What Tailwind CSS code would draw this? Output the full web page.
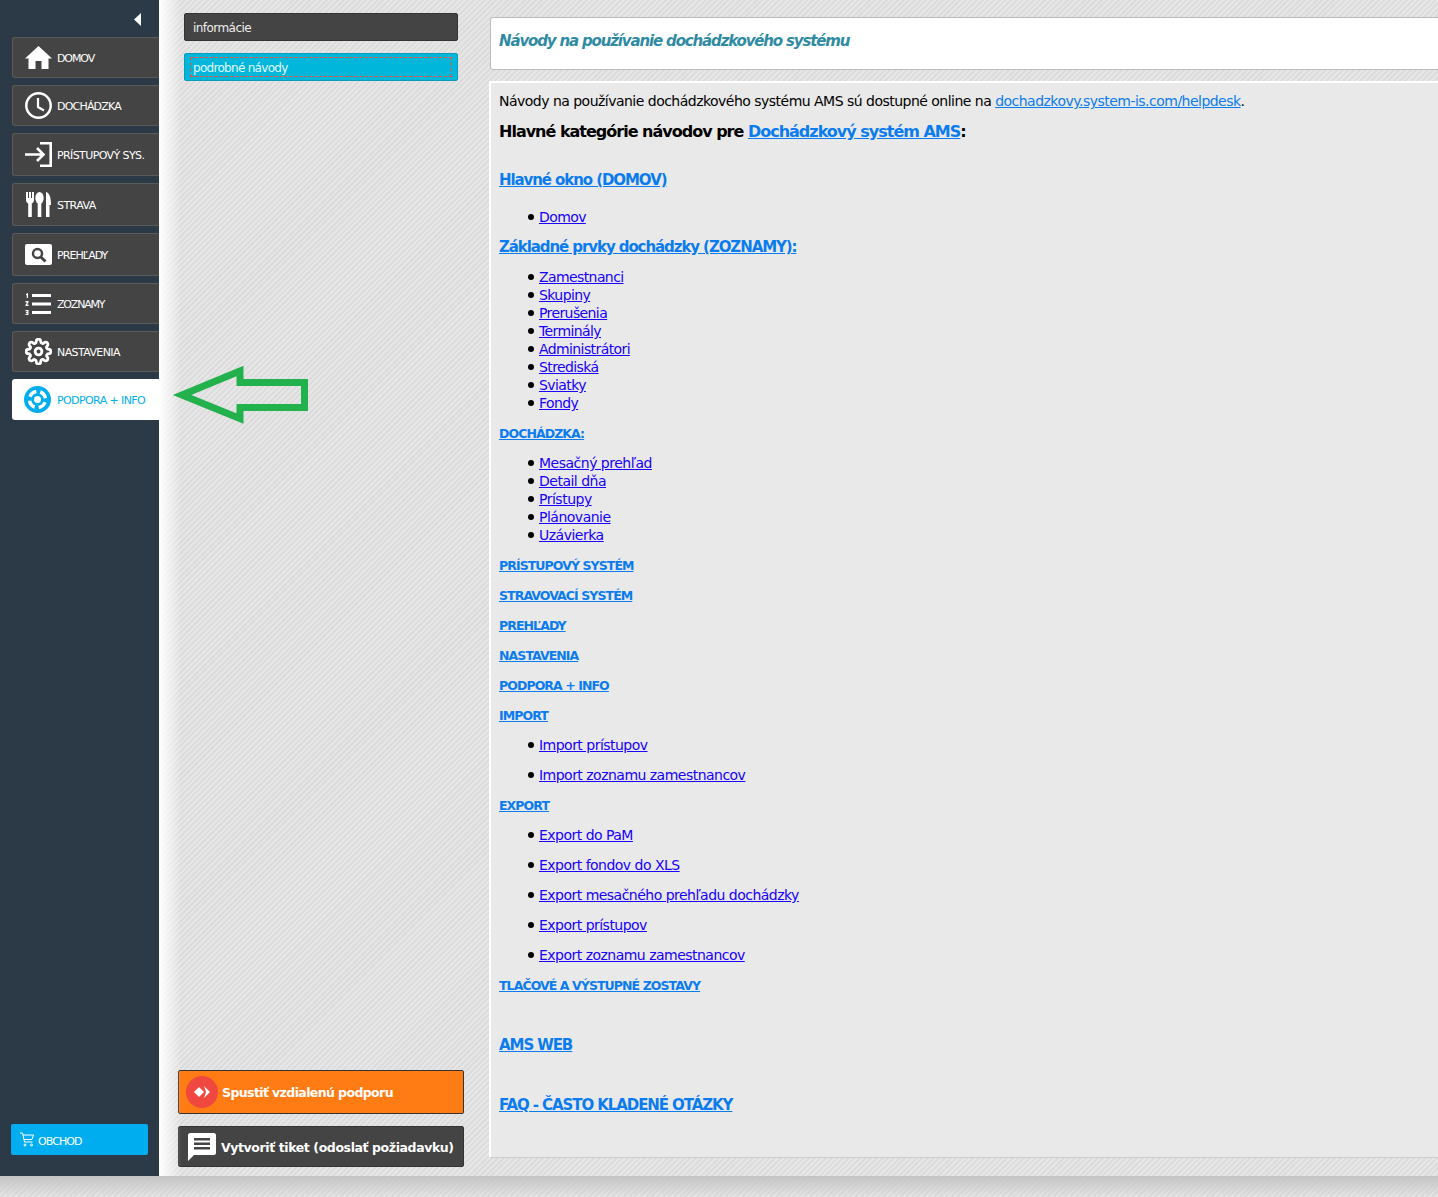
<!DOCTYPE html>
<html lang="sk">
<head>
<meta charset="UTF-8">
<title>Návody</title>
<script src="https://cdn.jsdelivr.net/npm/@tailwindcss/browser@4"></script>
</head>
<body class="bg-[#e2e2e2]">
<div class="relative w-[1438px] h-[1197px] overflow-hidden font-['DejaVu_Sans',sans-serif] bg-[repeating-linear-gradient(135deg,#e6e6e6_0px,#e6e6e6_2px,#dcdcdc_2px,#dcdcdc_4px)]">
  <div class="flex h-[1176px]">
    <!-- sidebar -->
    <aside class="w-[159px] shrink-0 bg-[#2c3a47] flex flex-col">
      <div class="h-[37px] flex justify-end pt-[13px] pr-[18px]">
        <svg width="7" height="13" viewBox="0 0 7 13"><path d="M7 0V13L0 6.500Z" fill="#fff"/></svg>
      </div>
      <a class="ml-[12px] h-[41px] mb-[7px] flex items-center pl-[12px] gap-[5px] bg-[#444] border border-r-0 border-[#5a5a5a] rounded-l-[3px] text-white text-[11px] tracking-[-1.1px]">
        <svg width="27" height="23" viewBox="0 0 27 23" fill="#fff"><path d="M13.500 0L27 12.500H23.500V23H16.500V15H10.500V23H3.500V12.500H0Z"/></svg><span class="mt-[4px]">DOMOV</span></a>
      <a class="ml-[12px] h-[41px] mb-[7px] flex items-center pl-[12px] gap-[5px] bg-[#444] border border-r-0 border-[#5a5a5a] rounded-l-[3px] text-white text-[11px] tracking-[-0.8px]">
        <svg width="27" height="27" viewBox="0 0 27 27" fill="none" stroke="#fff"><circle cx="13.500" cy="13.500" r="12.200" stroke-width="2.500"/><path d="M13 6V15L19 18.500" stroke-width="2.200"/></svg><span class="mt-[4px]">DOCHÁDZKA</span></a>
      <a class="ml-[12px] h-[43px] mb-[7px] flex items-center pl-[12px] gap-[5px] bg-[#444] border border-r-0 border-[#5a5a5a] rounded-l-[3px] text-white text-[11px] tracking-[-0.6px]">
        <svg width="27" height="25" viewBox="0 0 27 25" fill="none" stroke="#fff" stroke-width="2.600"><path d="M0 12.500H18M12 6L18.500 12.500L12 19"/><path d="M15 1.300H25.700V23.700H15"/></svg><span class="mt-[4px]">PRÍSTUPOVÝ SYS.</span></a>
      <a class="ml-[12px] h-[43px] mb-[7px] flex items-center pl-[13px] gap-[6px] bg-[#444] border border-r-0 border-[#5a5a5a] rounded-l-[3px] text-white text-[11px] tracking-[-0.55px]">
        <svg width="25" height="25" viewBox="0 0 25 25" fill="#fff"><path d="M0 0H2V6H3V0H5V6H6V0H8V8C8 10 7 11 5.800 11.500V25H2.200V11.500C1 11 0 10 0 8Z"/><ellipse cx="13.500" cy="6" rx="4.200" ry="6"/><rect x="11.700" y="10" width="3.600" height="15"/><path d="M20 0C23.500 1 25 5 25 13H23.500V25H20Z"/></svg><span class="mt-[4px]">STRAVA</span></a>
      <a class="ml-[12px] h-[43px] mb-[7px] flex items-center pl-[12px] gap-[5px] bg-[#444] border border-r-0 border-[#5a5a5a] rounded-l-[3px] text-white text-[11px] tracking-[-0.95px]">
        <svg width="27" height="21" viewBox="0 0 27 21"><rect width="27" height="21" rx="2" fill="#fff"/><circle cx="12.500" cy="9.500" r="4.500" fill="none" stroke="#444" stroke-width="2.400"/><path d="M15.800 13L20.500 17.500" stroke="#444" stroke-width="3"/></svg><span class="mt-[4px]">PREHĽADY</span></a>
      <a class="ml-[12px] h-[41px] mb-[7px] flex items-center pl-[12px] gap-[6px] bg-[#444] border border-r-0 border-[#5a5a5a] rounded-l-[3px] text-white text-[11px] tracking-[-1.2px]">
        <svg width="26" height="22" viewBox="0 0 26 22" fill="#fff"><path d="M7 1H26V4H7ZM7 9.500H26V12.500H7ZM7 18H26V21H7Z"/><path d="M1 1L3 0V5H1.800V2L1 2.200ZM0.500 8H3.500V9.500L1.800 11.500H3.500V13H0.500V11.700L2.200 9.500H0.500ZM0.500 17H3.500V22H0.500V20.800H2.300V20H1V19H2.300V18.200H0.500Z"/></svg><span class="mt-[4px]">ZOZNAMY</span></a>
      <a class="ml-[12px] h-[41px] mb-[7px] flex items-center pl-[12px] gap-[5px] bg-[#444] border border-r-0 border-[#5a5a5a] rounded-l-[3px] text-white text-[11px] tracking-[-0.6px]">
        <svg width="27" height="27" viewBox="0 0 24 24" fill="none" stroke="#fff" stroke-width="2.500"><circle cx="12" cy="12" r="3"/><path d="M19.400 15a1.650 1.650 0 0 0 .33 1.820l.06.06a2 2 0 1 1-2.830 2.830l-.06-.06a1.650 1.650 0 0 0-2.900 1.170V21a2 2 0 1 1-4 0v-.09a1.650 1.650 0 0 0-2.900-1.170l-.06.06a2 2 0 1 1-2.830-2.830l.06-.06a1.650 1.650 0 0 0-1.170-2.900H3a2 2 0 1 1 0-4h.09a1.650 1.650 0 0 0 1.170-2.900l-.06-.06a2 2 0 1 1 2.830-2.830l.06.06a1.650 1.650 0 0 0 2.900-1.170V3a2 2 0 1 1 4 0v.09a1.650 1.650 0 0 0 2.900 1.170l.06-.06a2 2 0 1 1 2.830 2.830l-.06.06a1.650 1.650 0 0 0 1.170 2.900H21a2 2 0 1 1 0 4h-.09a1.650 1.650 0 0 0-1.510 1z"/></svg><span class="mt-[4px]">NASTAVENIA</span></a>
      <a class="ml-[12px] h-[41px] flex items-center pl-[12px] gap-[6px] bg-white rounded-l-[3px] text-[#00aeef] text-[11px] tracking-[-0.6px]">
        <svg width="27" height="27" viewBox="0 0 27 27"><circle cx="13.500" cy="13.500" r="13.500" fill="#00aeef"/><circle cx="13.500" cy="13.500" r="8" fill="none" stroke="#fff" stroke-width="3.500" stroke-dasharray="8.500 4" transform="rotate(20 13.500 13.500)"/><circle cx="13.500" cy="13.500" r="3.500" fill="#fff"/></svg><span class="mt-[4px]">PODPORA + INFO</span></a>
      <a class="mt-auto mb-[21px] ml-[11px] w-[137px] h-[31px] flex items-center pl-[9px] gap-[4px] bg-[#00aeef] rounded-[2px] text-white text-[11px] tracking-[-0.9px]">
        <svg width="14" height="15" viewBox="0 0 14 15" fill="none" stroke="#fff"><path d="M0 1H2.500L4.500 10H12.500M3 3H13.500L12 7.500H4"/><circle cx="5" cy="13" r="1"/><circle cx="11.500" cy="13" r="1"/></svg><span class="mt-[5px]">OBCHOD</span></a>
    </aside>

    <!-- middle column -->
    <section class="relative w-[331px] shrink-0 flex flex-col pt-[13px] pb-[9px] pl-[19px]">
      <div class="absolute left-0 top-0 bottom-0 w-[22px] bg-gradient-to-r from-white to-transparent"></div>
      <div class="relative ml-[6px] w-[274px] h-[28px] flex items-center pl-[8px] pt-[2px] bg-[#444] border border-[#333] rounded-[2px] text-[#eee] text-[12px] tracking-[-0.55px]">informácie</div>
      <div class="relative ml-[6px] mt-[12px] w-[274px] h-[28px] px-[5px] py-[3px] bg-[#00b7db] border border-[#0a9cb8] rounded-[2px]">
        <div class="h-full flex items-center pl-[2px] pt-[2px] border border-dashed border-[#ff4a2a] text-[#e6f7fb] text-[12px] tracking-[-0.7px]">podrobné návody</div>
      </div>
      <a class="mt-auto w-[286px] h-[44px] flex items-center pl-[7px] gap-[4px] bg-[#ff7b14] border border-[#333] rounded-[2px] text-white font-bold text-[12.500px] tracking-[-0.6px]">
        <svg width="32" height="32" viewBox="0 0 32 32"><circle cx="16" cy="16" r="16" fill="#f0483e"/><path d="M13 11L18 16L13 21L8 16Z" fill="#fff"/><path d="M18 10L24 16L18 22L20 16Z" fill="#fff"/></svg><span class="mt-[2px]">Spustiť vzdialenú podporu</span></a>
      <a class="mt-[12px] w-[286px] h-[41px] flex items-center pl-[9px] gap-[5px] bg-[#444] border border-[#333] rounded-[2px] text-white font-bold text-[12.500px] tracking-[-0.4px]">
        <svg width="28" height="28" viewBox="0 0 28 28"><path d="M2 0H26C27 0 28 1 28 2V20C28 21 27 22 26 22H6L0 28V2C0 1 1 0 2 0Z" fill="#fff"/><path d="M6 5H22V7.500H6ZM6 9.500H22V12H6ZM6 14H22V16.500H6Z" fill="#444"/></svg><span class="mt-[4px]">Vytvoriť tiket (odoslať požiadavku)</span></a>
    </section>

    <!-- main -->
    <main class="w-[960px] shrink-0 pt-[17px] text-[14px] tracking-[-0.52px] text-black">
      <div class="h-[53px] bg-white border border-[#bbb] rounded-[3px] pl-[8px] pt-[12px] text-[15px] italic font-bold tracking-[-1.15px] text-[#2f8ba3]">Návody na používanie dochádzkového systému</div>
      <div class="mt-[11px] -ml-px h-[1077px] bg-[#e9e9e9] border-t-2 border-l-2 border-b border-t-white border-l-white border-b-[#ccc] pl-[8px] pt-[9px]">
        <p class="h-[18px] leading-[18px]">Návody na používanie dochádzkového systému AMS sú dostupné online na <a class="text-[#0a7cf0] underline">dochadzkovy.system-is.com/helpdesk</a>.</p>
        <p class="mt-[10px] h-[24px] leading-[24px] text-[16px] font-bold tracking-[-1px]">Hlavné kategórie návodov pre <a class="text-[#0a7cf0] underline">Dochádzkový systém AMS</a>:</p>
        <h2 class="mt-[24px] h-[24px] leading-[24px] text-[15px] font-bold tracking-[-1.08px]"><a class="text-[#0a7cf0] underline">Hlavné okno (DOMOV)</a></h2>
        <ul class="mt-[16px] pl-[40px] tracking-[-0.6px]">
          <li class="relative h-[18px] leading-[18px] before:absolute before:left-[-11px] before:top-[6px] before:size-[6px] before:rounded-full before:bg-black"><a class="text-[#1800ff] underline">Domov</a></li>
        </ul>
        <h2 class="mt-[9px] h-[24px] leading-[24px] text-[15px] font-bold tracking-[-1.08px]"><a class="text-[#0a7cf0] underline">Základné prvky dochádzky (ZOZNAMY):</a></h2>
        <ul class="mt-[9px] pl-[40px] tracking-[-0.6px]">
          <li class="relative h-[18px] leading-[18px] before:absolute before:left-[-11px] before:top-[6px] before:size-[6px] before:rounded-full before:bg-black"><a class="text-[#1800ff] underline">Zamestnanci</a></li>
          <li class="relative h-[18px] leading-[18px] before:absolute before:left-[-11px] before:top-[6px] before:size-[6px] before:rounded-full before:bg-black"><a class="text-[#1800ff] underline">Skupiny</a></li>
          <li class="relative h-[18px] leading-[18px] before:absolute before:left-[-11px] before:top-[6px] before:size-[6px] before:rounded-full before:bg-black"><a class="text-[#1800ff] underline">Prerušenia</a></li>
          <li class="relative h-[18px] leading-[18px] before:absolute before:left-[-11px] before:top-[6px] before:size-[6px] before:rounded-full before:bg-black"><a class="text-[#1800ff] underline">Terminály</a></li>
          <li class="relative h-[18px] leading-[18px] before:absolute before:left-[-11px] before:top-[6px] before:size-[6px] before:rounded-full before:bg-black"><a class="text-[#1800ff] underline">Administrátori</a></li>
          <li class="relative h-[18px] leading-[18px] before:absolute before:left-[-11px] before:top-[6px] before:size-[6px] before:rounded-full before:bg-black"><a class="text-[#1800ff] underline">Strediská</a></li>
          <li class="relative h-[18px] leading-[18px] before:absolute before:left-[-11px] before:top-[6px] before:size-[6px] before:rounded-full before:bg-black"><a class="text-[#1800ff] underline">Sviatky</a></li>
          <li class="relative h-[18px] leading-[18px] before:absolute before:left-[-11px] before:top-[6px] before:size-[6px] before:rounded-full before:bg-black"><a class="text-[#1800ff] underline">Fondy</a></li>
        </ul>
        <h3 class="mt-[13px] h-[18px] leading-[18px] text-[12.500px] font-bold tracking-[-0.92px]"><a class="text-[#0a7cf0] underline">DOCHÁDZKA:</a></h3>
        <ul class="mt-[11px] pl-[40px] tracking-[-0.5px]">
          <li class="relative h-[18px] leading-[18px] before:absolute before:left-[-11px] before:top-[6px] before:size-[6px] before:rounded-full before:bg-black"><a class="text-[#1800ff] underline">Mesačný prehľad</a></li>
          <li class="relative h-[18px] leading-[18px] before:absolute before:left-[-11px] before:top-[6px] before:size-[6px] before:rounded-full before:bg-black"><a class="text-[#1800ff] underline">Detail dňa</a></li>
          <li class="relative h-[18px] leading-[18px] before:absolute before:left-[-11px] before:top-[6px] before:size-[6px] before:rounded-full before:bg-black"><a class="text-[#1800ff] underline">Prístupy</a></li>
          <li class="relative h-[18px] leading-[18px] before:absolute before:left-[-11px] before:top-[6px] before:size-[6px] before:rounded-full before:bg-black"><a class="text-[#1800ff] underline">Plánovanie</a></li>
          <li class="relative h-[18px] leading-[18px] before:absolute before:left-[-11px] before:top-[6px] before:size-[6px] before:rounded-full before:bg-black"><a class="text-[#1800ff] underline">Uzávierka</a></li>
        </ul>
        <h3 class="mt-[13px] h-[18px] leading-[18px] text-[12.500px] font-bold tracking-[-0.92px]"><a class="text-[#0a7cf0] underline">PRÍSTUPOVÝ SYSTÉM</a></h3>
        <h3 class="mt-[12px] h-[18px] leading-[18px] text-[12.500px] font-bold tracking-[-0.92px]"><a class="text-[#0a7cf0] underline">STRAVOVACÍ SYSTÉM</a></h3>
        <h3 class="mt-[12px] h-[18px] leading-[18px] text-[12.500px] font-bold tracking-[-0.92px]"><a class="text-[#0a7cf0] underline">PREHĽADY</a></h3>
        <h3 class="mt-[12px] h-[18px] leading-[18px] text-[12.500px] font-bold tracking-[-0.92px]"><a class="text-[#0a7cf0] underline">NASTAVENIA</a></h3>
        <h3 class="mt-[12px] h-[18px] leading-[18px] text-[12.500px] font-bold tracking-[-0.92px]"><a class="text-[#0a7cf0] underline">PODPORA + INFO</a></h3>
        <h3 class="mt-[12px] h-[18px] leading-[18px] text-[12.500px] font-bold tracking-[-0.92px]"><a class="text-[#0a7cf0] underline">IMPORT</a></h3>
        <ul class="pl-[40px] mt-[11px] space-y-[12px]">
          <li class="relative h-[18px] leading-[18px] before:absolute before:left-[-11px] before:top-[6px] before:size-[6px] before:rounded-full before:bg-black"><a class="text-[#1800ff] underline">Import prístupov</a></li>
          <li class="relative h-[18px] leading-[18px] before:absolute before:left-[-11px] before:top-[6px] before:size-[6px] before:rounded-full before:bg-black"><a class="text-[#1800ff] underline">Import zoznamu zamestnancov</a></li>
        </ul>
        <h3 class="mt-[13px] h-[18px] leading-[18px] text-[12.500px] font-bold tracking-[-0.92px]"><a class="text-[#0a7cf0] underline">EXPORT</a></h3>
        <ul class="pl-[40px] mt-[11px] space-y-[12px]">
          <li class="relative h-[18px] leading-[18px] before:absolute before:left-[-11px] before:top-[6px] before:size-[6px] before:rounded-full before:bg-black"><a class="text-[#1800ff] underline">Export do PaM</a></li>
          <li class="relative h-[18px] leading-[18px] before:absolute before:left-[-11px] before:top-[6px] before:size-[6px] before:rounded-full before:bg-black"><a class="text-[#1800ff] underline">Export fondov do XLS</a></li>
          <li class="relative h-[18px] leading-[18px] before:absolute before:left-[-11px] before:top-[6px] before:size-[6px] before:rounded-full before:bg-black"><a class="text-[#1800ff] underline">Export mesačného prehľadu dochádzky</a></li>
          <li class="relative h-[18px] leading-[18px] before:absolute before:left-[-11px] before:top-[6px] before:size-[6px] before:rounded-full before:bg-black"><a class="text-[#1800ff] underline">Export prístupov</a></li>
          <li class="relative h-[18px] leading-[18px] before:absolute before:left-[-11px] before:top-[6px] before:size-[6px] before:rounded-full before:bg-black"><a class="text-[#1800ff] underline">Export zoznamu zamestnancov</a></li>
        </ul>
        <h3 class="mt-[13px] h-[18px] leading-[18px] text-[12.500px] font-bold tracking-[-0.92px]"><a class="text-[#0a7cf0] underline">TLAČOVÉ A VÝSTUPNÉ ZOSTAVY</a></h3>
        <h2 class="mt-[38px] h-[24px] leading-[24px] text-[15px] font-bold tracking-[-1.08px]"><a class="text-[#0a7cf0] underline">AMS WEB</a></h2>
        <h2 class="mt-[36px] h-[24px] leading-[24px] text-[15px] font-bold tracking-[-1.08px]"><a class="text-[#0a7cf0] underline">FAQ - ČASTO KLADENÉ OTÁZKY</a></h2>
      </div>
    </main>
  </div>
  <!-- bottom strip -->
  <div class="h-[21px] bg-gradient-to-b from-[#c4c4c4] to-transparent"></div>
  <!-- green annotation arrow -->
  <svg class="absolute left-[172px] top-[366px]" width="138" height="58" viewBox="0 0 138 58"><path d="M10 29L68 5V16.500H132.500V41.500H68V52.500Z" fill="none" stroke="#22b14c" stroke-width="7"/></svg>
</div>
</body>
</html>
